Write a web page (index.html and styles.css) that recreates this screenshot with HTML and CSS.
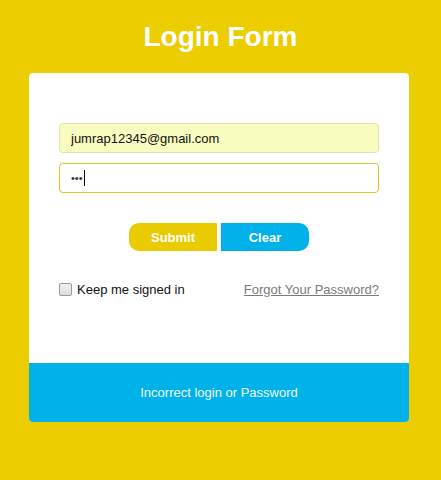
FILE: index.html
```html
<!DOCTYPE html>
<html>
<head>
<meta charset="utf-8">
<link rel="stylesheet" href="styles.css">
</head>
<body>
<h1 class="title">Login Form</h1>
<div class="card">
  <form class="form">
    <input class="field field-email" type="text" value="jumrap12345@gmail.com">
    <div class="pass-wrap">
      <input class="field field-pass" type="text" value="•••">
      <span class="caret"></span>
    </div>
    <div class="buttons">
      <button type="button" class="btn btn-submit">Submit</button>
      <button type="button" class="btn btn-clear">Clear</button>
    </div>
    <div class="options">
      <label class="remember"><span class="check"></span>Keep me signed in</label>
      <a class="forgot" href="#">Forgot Your Password?</a>
    </div>
  </form>
  <div class="message">Incorrect login or Password</div>
</div>
</body>
</html>
```
FILE: styles.css
```css
html, body {
  margin: 0;
  padding: 0;
}
body {
  background: #ebcd00;
  font-family: "Liberation Sans", Arial, sans-serif;
  width: 441px;
  height: 480px;
  overflow: hidden;
}
.title {
  margin: 0;
  padding-top: 20px;
  height: 73px;
  box-sizing: border-box;
  text-align: center;
  color: #ffffff;
  font-size: 28px;
  font-weight: bold;
  line-height: 33px;
}
.card {
  margin-left: 29px;
  width: 380px;
  background: #ffffff;
  border-radius: 4px;
  overflow: hidden;
}
.form {
  padding: 50px 30px 0 30px;
  height: 290px;
  box-sizing: border-box;
  display: flex;
  flex-direction: column;
}
.field {
  display: block;
  width: 320px;
  height: 30px;
  box-sizing: border-box;
  border-radius: 4px;
  padding: 0 11px;
  font-family: "Liberation Sans", Arial, sans-serif;
  font-size: 13px;
  color: #111111;
  outline: none;
}
.field-email {
  background: #f9fcbf;
  border: 1px solid #e3e0b8;
}
.pass-wrap {
  position: relative;
  margin-top: 10px;
}
.field-pass {
  background: #ffffff;
  border: 1px solid #dcc623;
  font-size: 11px;
  letter-spacing: 0;
  color: #333333;
}
.caret {
  position: absolute;
  left: 25px;
  top: 7px;
  width: 1px;
  height: 16px;
  background: #000000;
}
.buttons {
  margin-top: 30px;
  display: flex;
  justify-content: center;
  gap: 4px;
}
.btn {
  width: 88px;
  height: 28px;
  border: none;
  color: #ffffff;
  font-family: "Liberation Sans", Arial, sans-serif;
  font-size: 13px;
  font-weight: bold;
  padding: 0;
}
.btn-submit {
  background: #e9cb00;
  border-radius: 10px 0 0 10px;
}
.btn-clear {
  background: #00b1ea;
  border-radius: 0 10px 10px 0;
}
.options {
  margin-top: 30px;
  display: flex;
  justify-content: space-between;
  align-items: center;
  font-size: 13px;
  height: 16px;
}
.remember {
  display: flex;
  align-items: center;
  color: #111111;
}
.check {
  width: 11px;
  height: 11px;
  border: 1px solid #9a9a9a;
  border-radius: 2px;
  background: linear-gradient(#f2f2f2, #dcdcdc);
  margin-right: 5px;
}
.forgot {
  color: #7a7a7a;
  text-decoration: underline;
}
.message {
  height: 59px;
  background: #00b1ea;
  color: #eef8ff;
  font-size: 13px;
  display: flex;
  align-items: center;
  justify-content: center;
}
```
